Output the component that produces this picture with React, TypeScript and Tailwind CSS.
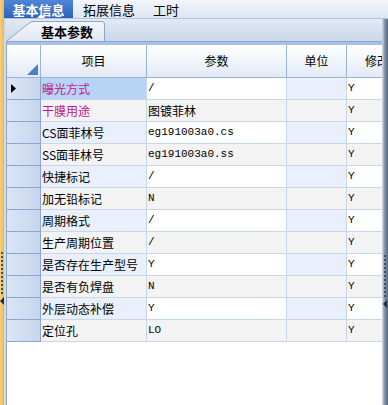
import React from 'react';

const rows = [
  { name: '曝光方式', value: '/', mod: 'Y', pink: true, selected: true },
  { name: '干膜用途', value: '图镀菲林', mod: 'Y', pink: true },
  { name: 'CS面菲林号', value: 'eg191003a0.cs', mod: 'Y' },
  { name: 'SS面菲林号', value: 'eg191003a0.ss', mod: 'Y' },
  { name: '快捷标记', value: '/', mod: 'Y' },
  { name: '加无铅标记', value: 'N', mod: 'Y' },
  { name: '周期格式', value: '/', mod: 'Y' },
  { name: '生产周期位置', value: '/', mod: 'Y' },
  { name: '是否存在生产型号', value: 'Y', mod: 'Y' },
  { name: '是否有负焊盘', value: 'N', mod: 'Y' },
  { name: '外层动态补偿', value: 'Y', mod: 'Y' },
  { name: '定位孔', value: 'LO', mod: 'Y' },
];

const cjk = "font-['SimSun','Noto_Sans_CJK_SC',sans-serif]";
const mono = "font-['Liberation_Mono','Noto_Sans_CJK_SC',monospace]";

function isLatin(s: string) {
  return /^[\x00-\x7f]+$/.test(s);
}

function Grip() {
  return (
    <div className="flex flex-col gap-[2px] items-center">
      {Array.from({ length: 11 }).map((_, i) => (
        <div key={i} className="w-[2px] h-[2px] bg-[#3d4f6b]" />
      ))}
    </div>
  );
}

export default function App() {
  return (
    <div className="w-[388px] h-[405px] flex overflow-hidden bg-white text-black">
      {/* left orange splitter */}
      <div className="w-[4px] shrink-0 bg-gradient-to-r from-[#f7d27d] to-[#eeb44f] flex flex-col items-center pt-[252px] gap-[2px]">
        <Grip />
        <svg width="4" height="8" viewBox="0 0 4 8" className="mt-[1px]">
          <path d="M4 0 L0 4 L4 8 Z" fill="#1f2b40" />
        </svg>
      </div>

      <div className="flex-1 flex flex-col min-w-0">
        {/* main tabs */}
        <div className={`h-[19px] flex items-stretch bg-gradient-to-b from-[#f3f6fb] to-[#dde5f1] border-b border-[#b6c6de] text-[13px] leading-none ${cjk}`}>
          <div className="relative w-[69px] bg-gradient-to-b from-[#4f86d8] to-[#2c62bd] text-white font-bold flex items-center justify-center">
            基本信息
            <div className="absolute bottom-0 left-[33px] w-0 h-0 border-l-[4px] border-r-[4px] border-b-[4px] border-l-transparent border-r-transparent border-b-white" />
          </div>
          <div className="pl-[10px] flex items-center">拓展信息</div>
          <div className="pl-[18px] flex items-center">工时</div>
        </div>

        <div className="flex flex-1 min-h-0">
          <div className="flex-1 flex flex-col min-w-0 pl-[2px] bg-[#d3dbe6]">
            {/* sub tab band */}
            <div className="h-[22px] bg-gradient-to-b from-[#e3eaf5] to-[#c9d7eb] flex items-end">
              <div className="relative w-[100px] h-[20px] flex items-center justify-center">
                <svg width="100" height="20" viewBox="0 0 100 20" className="absolute inset-0">
                  <defs>
                    <linearGradient id="tabg" x1="0" y1="0" x2="0" y2="1">
                      <stop offset="0" stopColor="#f4f7fc" />
                      <stop offset="1" stopColor="#dfe8f5" />
                    </linearGradient>
                  </defs>
                  <path d="M0.5 20 L24 1.5 Q25 0.5 27 0.5 L96 0.5 Q98.5 0.5 98.5 3 L98.5 20" fill="url(#tabg)" stroke="#8ea6c9" strokeWidth="1" />
                </svg>
                <span className={`relative pl-[22px] text-[13px] font-bold leading-none ${cjk}`}>基本参数</span>
              </div>
            </div>

            {/* grid */}
            <div className="flex-1 border-t border-[#6c8dbd] border-l border-[#8ea6c9] flex flex-col">
              <div className="h-[3px] bg-[#a9c1e6]" />
              <div className="flex-1 bg-white">
                <div className={`flex h-[33px] bg-gradient-to-b from-white to-[#e2eaf6] border-b border-[#9db3d4] text-[12px] ${cjk}`}>
                  <div className="w-[34px] shrink-0 relative border-r border-[#9db3d4]">
                    <svg width="11" height="11" viewBox="0 0 11 11" className="absolute right-[2px] bottom-[2px]">
                      <path d="M11 0 L11 11 L0 11 Z" fill="#4a7fd0" />
                    </svg>
                  </div>
                  <div className="w-[106px] shrink-0 flex items-center justify-center border-r border-[#9db3d4]">项目</div>
                  <div className="w-[140px] shrink-0 flex items-center justify-center border-r border-[#9db3d4]">参数</div>
                  <div className="w-[60px] shrink-0 flex items-center justify-center border-r border-[#9db3d4]">单位</div>
                  <div className="flex-1 overflow-hidden whitespace-nowrap flex items-center pl-[18px]">修改</div>
                </div>

                {rows.map((r, i) => {
                  const even = i % 2 === 1;
                  const rowBg = even ? 'bg-[#f3f3f3]' : 'bg-white';
                  const tintBg = even ? 'bg-[#f3f3f3]' : 'bg-[#e9f0fb]';
                  return (
                    <div key={r.name} className="flex h-[22px] border-b border-[#c8d6ec] text-[12px] leading-none">
                      <div className="w-[34px] shrink-0 bg-gradient-to-r from-[#dbe6f6] to-[#c6d6ee] border-r border-[#8ea6c9] border-b border-b-[#8ea6c9] -mb-px flex items-center pl-[4px]">
                        {r.selected && (
                          <svg width="5" height="9" viewBox="0 0 5 9">
                            <path d="M0 0 L5 4.5 L0 9 Z" fill="#000" />
                          </svg>
                        )}
                      </div>
                      <div className={`w-[106px] shrink-0 flex items-center pl-[1px] border-r border-[#c8d6ec] ${r.selected ? 'bg-[#b7d4f4]' : tintBg} ${r.pink ? 'text-[#c0178f]' : ''} ${cjk} whitespace-nowrap overflow-hidden`}>
                        {r.name}
                      </div>
                      <div className={`w-[140px] shrink-0 flex items-center pl-[1px] border-r border-[#c8d6ec] ${rowBg} ${isLatin(r.value) ? `${mono} text-[11px]` : cjk}`}>
                        {r.value}
                      </div>
                      <div className={`w-[60px] shrink-0 border-r border-[#c8d6ec] ${tintBg}`} />
                      <div className={`flex-1 flex items-center pl-[1px] ${rowBg} ${mono} text-[11px]`}>{r.mod}</div>
                    </div>
                  );
                })}
              </div>
            </div>
          </div>

          {/* right splitter */}
          <div className="w-[6px] shrink-0 bg-gradient-to-r from-[#d8dee8] via-[#7e8ba0] to-[#5d6b82] flex flex-col items-center pt-[236px] gap-[3px]">
            <Grip />
            <svg width="4" height="8" viewBox="0 0 4 8">
              <path d="M4 0 L0 4 L4 8 Z" fill="#1f2b40" />
            </svg>
          </div>
        </div>
      </div>
    </div>
  );
}
